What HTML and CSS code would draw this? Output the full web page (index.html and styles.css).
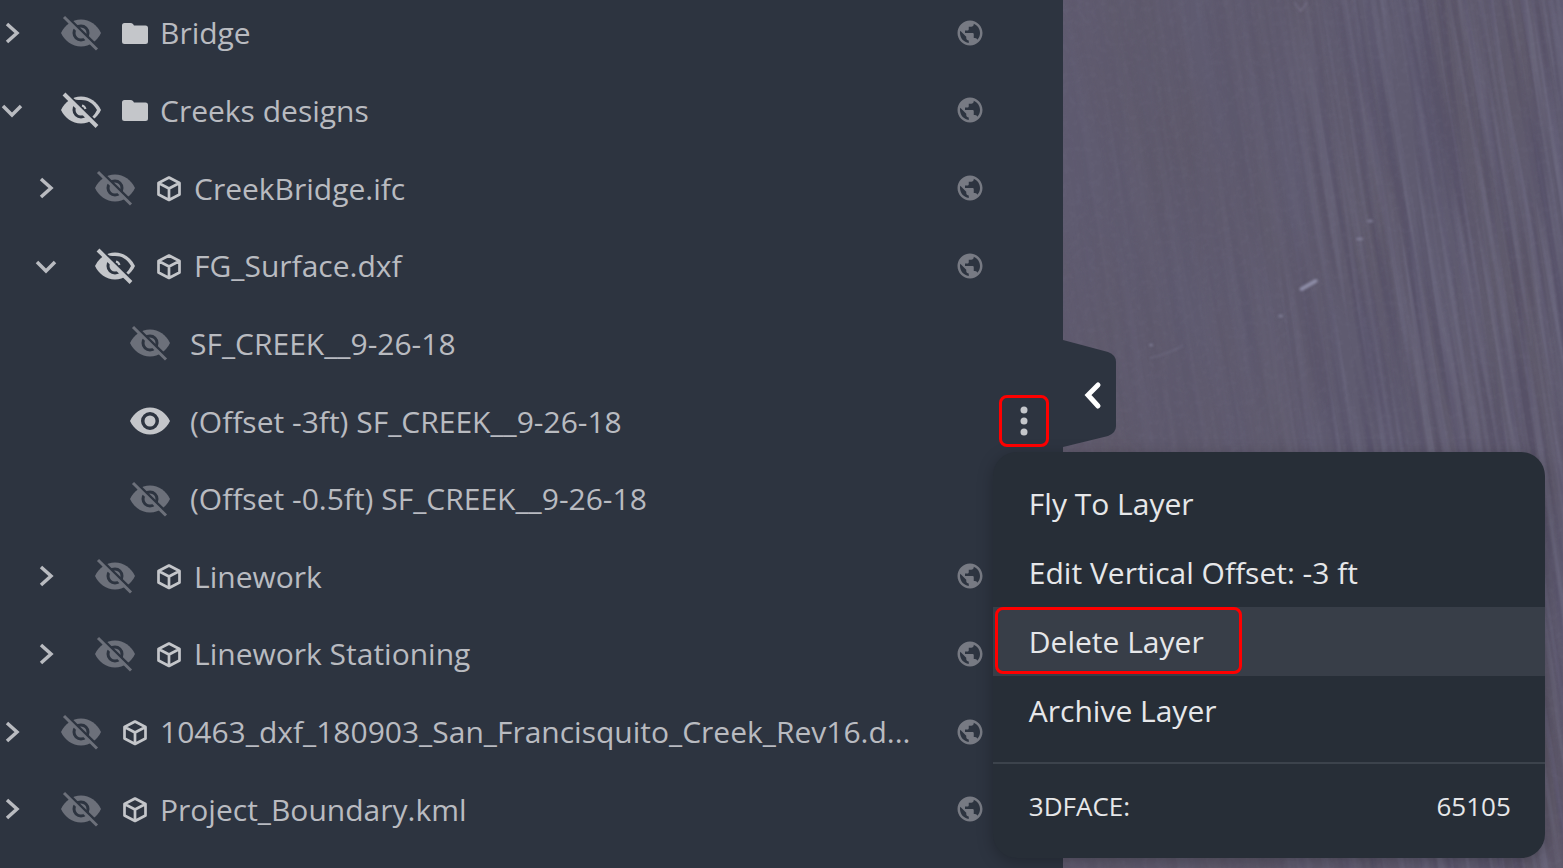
FILE: index.html
```html
<!DOCTYPE html>
<html lang="en">
    <head>
        <meta charset="utf-8">
        <title>Layers</title>
        <link rel="stylesheet" href="styles.css">
    </head>
    <body>
        <!-- icon sprite -->
        <svg class="sprite" width="0" height="0" aria-hidden="true">
            <defs>
                <mask id="off-mask" maskUnits="userSpaceOnUse" x="0" y="0" width="40" height="36">
                    <rect width="40" height="36" fill="#fff"/>
                    <circle cx="20" cy="18" r="7" fill="none" stroke="#000" stroke-width="3"/>
                    <path d="M3 -1L39 34" stroke="#000" stroke-width="3"/>
                </mask>
                <mask id="partial-mask" maskUnits="userSpaceOnUse" x="0" y="0" width="40" height="36">
                    <rect width="40" height="36" fill="#fff"/>
                    <path d="M11 6C14 8 16 8 20 8C27 8 32 11 36 18C34.500 21 33 23 31 25z" fill="#000"/>
                    <circle cx="20" cy="18" r="7" fill="none" stroke="#000" stroke-width="3"/>
                    <path d="M3 -1L39 34" stroke="#000" stroke-width="3"/>
                </mask>
            </defs>
            <symbol id="right" viewBox="0 0 24 24">
                <path d="M7 3L17 12L7 21" fill="none" stroke="currentColor" stroke-width="3.500"/>
            </symbol>
            <symbol id="down" viewBox="0 0 24 24">
                <path d="M3 8L12 17L21 8" fill="none" stroke="currentColor" stroke-width="3.500"/>
            </symbol>
            <symbol id="eye" viewBox="0 0 40 36">
                <path fill="currentColor" fill-rule="evenodd" d="M0 18C4 10 11 4.500 20 4.500S36 10 40 18C36 26 29 31.500 20 31.500S4 26 0 18zM20 9a9 9 0 1 0 0 18a9 9 0 1 0 0-18zM20 12.500a5.500 5.500 0 1 1 0 11a5.500 5.500 0 1 1 0-11z"/>
            </symbol>
            <symbol id="eye-off" viewBox="0 0 40 36">
                <path mask="url(#off-mask)" fill="currentColor" d="M0 18C4 10 11 4.500 20 4.500S36 10 40 18C36 26 29 31.500 20 31.500S4 26 0 18z"/>
                <path d="M3 2L36 34.500" stroke="currentColor" stroke-width="3"/>
            </symbol>
            <symbol id="eye-partial" viewBox="0 0 40 36">
                <path mask="url(#partial-mask)" fill="currentColor" d="M0 18C4 10 11 4.500 20 4.500S36 10 40 18C36 26 29 31.500 20 31.500S4 26 0 18z"/>
                <path d="M21 13.500C23 14 24 15 24.500 17" fill="none" stroke="currentColor" stroke-width="2"/>
                <path d="M3 2L36 34.500" stroke="currentColor" stroke-width="4"/>
            </symbol>
            <symbol id="folder" viewBox="0 0 28 28">
                <path fill="currentColor" d="M1 6.500Q1 4 3.500 4H9.500Q11 4 12 5L13 6.500H24.500Q27 6.500 27 9V22.500Q27 25 24.500 25H3.500Q1 25 1 22.500z"/>
            </symbol>
            <symbol id="cube" viewBox="0 0 28 28">
                <path d="M14 3.500L24.500 9V20.500L14 26L3.500 20.500V9zM3.500 9L14 14.500L24.500 9M14 14.500V26" fill="none" stroke="currentColor" stroke-width="2.700" stroke-linejoin="round"/>
            </symbol>
            <symbol id="globe" viewBox="0 0 24 24">
                <path fill="currentColor" d="M12 2C6.480 2 2 6.480 2 12s4.480 10 10 10 10-4.480 10-10S17.520 2 12 2zm-1 17.930c-3.950-.490-7-3.850-7-7.930 0-.620.080-1.210.210-1.790L9 15v1c0 1.100.900 2 2 2v1.930zm6.900-2.540c-.260-.810-1-1.390-1.900-1.390h-1v-3c0-.550-.450-1-1-1H8v-2h2c.550 0 1-.450 1-1V7h2c1.100 0 2-.900 2-2v-.410c2.930 1.190 5 4.060 5 7.410 0 2.080-.800 3.970-2.100 5.390z"/>
            </symbol>
        </svg>
        <div class="app">
            <div class="sidebar">
                <ul class="layers">
                    <li class="row">
                        <button class="toggle" aria-label="Expand"><svg><use href="#right"/></svg></button>
                        <button class="visibility hidden" aria-label="Show"><svg><use href="#eye-off"/></svg></button>
                        <svg class="type"><use href="#folder"/></svg>
                        <span class="name">Bridge</span>
                        <svg class="globe"><use href="#globe"/></svg>
                    </li>
                    <li class="row">
                        <button class="toggle" aria-label="Collapse"><svg><use href="#down"/></svg></button>
                        <button class="visibility" aria-label="Show all"><svg><use href="#eye-partial"/></svg></button>
                        <svg class="type"><use href="#folder"/></svg>
                        <span class="name">Creeks designs</span>
                        <svg class="globe"><use href="#globe"/></svg>
                    </li>
                    <li class="row level1">
                        <button class="toggle" aria-label="Expand"><svg><use href="#right"/></svg></button>
                        <button class="visibility hidden" aria-label="Show"><svg><use href="#eye-off"/></svg></button>
                        <svg class="type"><use href="#cube"/></svg>
                        <span class="name">CreekBridge.ifc</span>
                        <svg class="globe"><use href="#globe"/></svg>
                    </li>
                    <li class="row level1">
                        <button class="toggle" aria-label="Collapse"><svg><use href="#down"/></svg></button>
                        <button class="visibility" aria-label="Show all"><svg><use href="#eye-partial"/></svg></button>
                        <svg class="type"><use href="#cube"/></svg>
                        <span class="name">FG_Surface.dxf</span>
                        <svg class="globe"><use href="#globe"/></svg>
                    </li>
                    <li class="row leaf">
                        <button class="visibility hidden" aria-label="Show"><svg><use href="#eye-off"/></svg></button>
                        <span class="name">SF_CREEK__9-26-18</span>
                    </li>
                    <li class="row leaf">
                        <button class="visibility" aria-label="Hide"><svg><use href="#eye"/></svg></button>
                        <span class="name">(Offset -3ft) SF_CREEK__9-26-18</span>
                        <button class="more marked" aria-label="Layer menu">
                            <svg viewBox="0 0 8 30"><circle cx="4" cy="4" r="3.500"/><circle cx="4" cy="15" r="3.500"/><circle cx="4" cy="26" r="3.500"/></svg>
                        </button>
                        <div class="menu">
                            <button class="item"><span>Fly To Layer</span></button>
                            <button class="item"><span>Edit Vertical Offset: -3 ft</span></button>
                            <button class="item active"><span class="marked">Delete Layer</span></button>
                            <button class="item"><span>Archive Layer</span></button>
                            <div class="info"><span>3DFACE:</span><span>65105</span></div>
                        </div>
                    </li>
                    <li class="row leaf">
                        <button class="visibility hidden" aria-label="Show"><svg><use href="#eye-off"/></svg></button>
                        <span class="name">(Offset -0.5ft) SF_CREEK__9-26-18</span>
                    </li>
                    <li class="row level1">
                        <button class="toggle" aria-label="Expand"><svg><use href="#right"/></svg></button>
                        <button class="visibility hidden" aria-label="Show"><svg><use href="#eye-off"/></svg></button>
                        <svg class="type"><use href="#cube"/></svg>
                        <span class="name">Linework</span>
                        <svg class="globe"><use href="#globe"/></svg>
                    </li>
                    <li class="row level1">
                        <button class="toggle" aria-label="Expand"><svg><use href="#right"/></svg></button>
                        <button class="visibility hidden" aria-label="Show"><svg><use href="#eye-off"/></svg></button>
                        <svg class="type"><use href="#cube"/></svg>
                        <span class="name">Linework Stationing</span>
                        <svg class="globe"><use href="#globe"/></svg>
                    </li>
                    <li class="row">
                        <button class="toggle" aria-label="Expand"><svg><use href="#right"/></svg></button>
                        <button class="visibility hidden" aria-label="Show"><svg><use href="#eye-off"/></svg></button>
                        <svg class="type"><use href="#cube"/></svg>
                        <span class="name">10463_dxf_180903_San_Francisquito_Creek_Rev16.d...</span>
                        <svg class="globe"><use href="#globe"/></svg>
                    </li>
                    <li class="row">
                        <button class="toggle" aria-label="Expand"><svg><use href="#right"/></svg></button>
                        <button class="visibility hidden" aria-label="Show"><svg><use href="#eye-off"/></svg></button>
                        <svg class="type"><use href="#cube"/></svg>
                        <span class="name">Project_Boundary.kml</span>
                        <svg class="globe"><use href="#globe"/></svg>
                    </li>
                </ul>
                <button class="collapse" aria-label="Collapse panel">
                    <svg viewBox="0 0 54 108">
                        <path d="M0 0L45 12Q53 15 53 22V86Q53 93 45 96L0 107z" fill="#2d3440"/>
                        <path d="M35 45L25 55L35 66" fill="none" stroke="#fff" stroke-width="5" stroke-linecap="round"/>
                    </svg>
                </button>
            </div>
            <div class="map">
                <svg viewBox="0 0 501 868" preserveAspectRatio="xMidYMid slice" aria-hidden="true">
                    <defs>
                        <linearGradient id="fade">
                            <stop offset="0" stop-color="#222"/>
                            <stop offset=".4" stop-color="#444"/>
                            <stop offset=".6" stop-color="#ccc"/>
                            <stop offset="1" stop-color="#fff"/>
                        </linearGradient>
                        <mask id="fade-mask" maskUnits="userSpaceOnUse" x="0" y="0" width="501" height="868">
                            <rect width="501" height="868" fill="url(#fade)"/>
                        </mask>
                        <filter id="furrows" x="0" y="0" width="100%" height="100%" color-interpolation-filters="sRGB">
                            <feTurbulence type="fractalNoise" baseFrequency=".13 .004" numOctaves="2" seed="4"/>
                            <feColorMatrix values="0 0 0 0 .47  0 0 0 0 .46  0 0 0 0 .56  4 0 0 0 -1.7"/>
                        </filter>
                        <filter id="ruts" x="0" y="0" width="100%" height="100%" color-interpolation-filters="sRGB">
                            <feTurbulence type="fractalNoise" baseFrequency=".1 .004" numOctaves="2" seed="12"/>
                            <feColorMatrix values="0 0 0 0 .28  0 0 0 0 .25  0 0 0 0 .36  4 0 0 0 -1.8"/>
                        </filter>
                        <filter id="shade" x="0" y="0" width="100%" height="100%" color-interpolation-filters="sRGB">
                            <feTurbulence type="fractalNoise" baseFrequency=".012 .003" numOctaves="3" seed="9"/>
                            <feColorMatrix values="0 0 0 0 .37  0 0 0 0 .34  0 0 0 0 .38  2 0 0 0 -.8"/>
                        </filter>
                        <filter id="soil" x="0" y="0" width="100%" height="100%" color-interpolation-filters="sRGB">
                            <feTurbulence type="fractalNoise" baseFrequency=".15" numOctaves="2" seed="2"/>
                            <feColorMatrix values="0 0 0 0 .55  0 0 0 0 .54  0 0 0 0 .63  3 0 0 0 -1.4"/>
                        </filter>
                        <filter id="soft"><feGaussianBlur stdDeviation="1"/></filter>
                    </defs>
                    <rect width="501" height="868" fill="#5f5b70"/>
                    <rect x="-200" y="-200" width="900" height="1300" filter="url(#shade)" opacity=".5" transform="rotate(-8 250 434)"/>
                    <g mask="url(#fade-mask)">
                        <rect x="-200" y="-200" width="900" height="1300" filter="url(#furrows)" opacity=".4" transform="rotate(-9 250 434)"/>
                        <rect x="-200" y="-200" width="900" height="1300" filter="url(#ruts)" opacity=".3" transform="rotate(-9 250 434)"/>
                    </g>
                    <rect width="501" height="868" filter="url(#soil)" opacity=".06"/>
                    <g filter="url(#soft)" fill="none" stroke="#8d8ca6" stroke-linecap="round">
                        <path d="M239 289L253 281" stroke-width="4"/>
                        <path d="M217 316h2M306 221h3M295 239h4M88 345h1" stroke-width="3" opacity=".6"/>
                        <path d="M232 3l6 8 6-8" stroke-width="2" opacity=".3"/>
                        <path d="M88 358Q105 354 120 346" stroke-width="2" opacity=".2"/>
                    </g>
                </svg>
            </div>
        </div>
    </body>
</html>
```
FILE: styles.css
```css
* {
    box-sizing: border-box;
}
body {
    margin: 0;
    background: #2d3440;
    color: #b9bbc0;
    font-family: "Open Sans", "Noto Sans", sans-serif;
    font-size: 30px;
}
button {
    padding: 0;
    border: 0;
    background: none;
    color: inherit;
    font: inherit;
    cursor: pointer;
}
svg {
    display: block;
}
.sprite {
    position: absolute;
}
.app {
    display: flex;
    min-height: 100vh;
    overflow: hidden;
}
.sidebar {
    position: relative;
    z-index: 1;
    display: flex;
    flex: 0 0 68%;
    background: #2d3440;
}
.layers {
    display: flex;
    flex: 1;
    flex-direction: column;
    margin: -6px 0 0;
    padding: 0 0 20px;
    list-style: none;
}
.row {
    position: relative;
    display: flex;
    flex: 1;
    align-items: center;
    min-height: 60px;
    padding-right: 78px;
}
.level1 {
    padding-left: 34px;
}
.leaf {
    padding: 0 14px 0 130px;
}
.toggle {
    margin-right: 37px;
}
.toggle svg {
    width: 24px;
    height: 24px;
}
.visibility {
    margin-right: 20px;
    color: #c4c6ca;
}
.visibility svg {
    width: 40px;
    height: 36px;
}
.visibility.hidden {
    color: #6c707a;
}
.type {
    width: 28px;
    height: 28px;
    margin-right: 11px;
    color: #c4c6ca;
}
.name {
    flex: 1;
    white-space: nowrap;
}
.globe {
    width: 30px;
    height: 30px;
    color: #777a83;
}
.marked {
    border: 3px solid #f00;
    border-radius: 8px;
}
.more {
    display: flex;
    align-items: center;
    justify-content: center;
    width: 50px;
    height: 52px;
}
.more svg {
    width: 8px;
    height: 30px;
    fill: #c4c6ca;
}
.menu {
    position: absolute;
    top: calc(50% + 31px);
    left: calc(100% - 70px);
    z-index: 2;
    width: 552px;
    padding-top: 17px;
    border-radius: 24px;
    background: #272e37;
    box-shadow: 0 4px 16px rgba(0, 0, 0, 0.25);
    color: #e6e7e9;
}
.item {
    display: flex;
    width: 100%;
    height: 69px;
    line-height: 69px;
}
.item span {
    padding: 0 36px;
}
.item.active {
    background: #383e48;
}
.item .marked {
    height: 67px;
    margin-left: 2px;
    padding: 0 35px 0 31px;
    line-height: 63px;
}
.info {
    display: flex;
    justify-content: space-between;
    margin-top: 17px;
    padding: 24px 34px 34px 36px;
    border-top: 2px solid #3c434c;
    font-size: 26px;
    line-height: 36px;
}
.collapse {
    position: absolute;
    top: 340px;
    left: 100%;
}
.collapse svg {
    width: 54px;
    height: 108px;
}
.map {
    position: relative;
    flex: 1;
    background: #5f5b70;
}
.map svg {
    position: absolute;
    width: 100%;
    height: 100%;
}
```
